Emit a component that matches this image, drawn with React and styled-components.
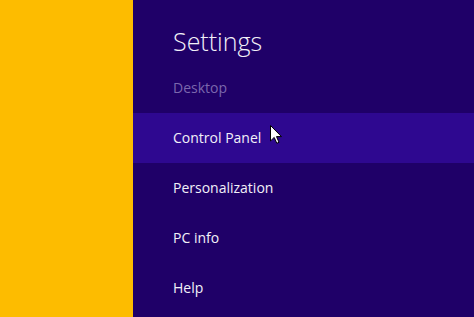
import React from "react";
import styled, { createGlobalStyle } from "styled-components";

const items = [
  { label: "Desktop", muted: true },
  { label: "Control Panel", active: true },
  { label: "Personalization" },
  { label: "PC info" },
  { label: "Help" },
];

export default function App() {
  return (
    <>
      <Global />
      <Screen>
        <Backdrop />
        <Charm>
          <Title>Settings</Title>
          <List>
            {items.map((it) => (
              <Item key={it.label} $active={it.active} $muted={it.muted}>
                <Label>{it.label}</Label>
                {it.active && (
                  <Cursor viewBox="0 0 12 19" width="12" height="19">
                    <path
                      d="M0.5 0.5 L0.5 16 L4.2 12.4 L6.8 18.3 L9 17.3 L6.5 11.6 L11.5 11.6 Z"
                      fill="#fff"
                      stroke="#000"
                      strokeWidth="1"
                      strokeLinejoin="miter"
                    />
                  </Cursor>
                )}
              </Item>
            ))}
          </List>
        </Charm>
      </Screen>
    </>
  );
}

const Global = createGlobalStyle`
  html, body {
    margin: 0;
    padding: 0;
    overflow: hidden;
  }
`;

const Screen = styled.div`
  display: flex;
  width: 474px;
  height: 317px;
  font-family: "Open Sans", "Noto Sans", sans-serif;
`;

const Backdrop = styled.div`
  flex: 0 0 133px;
  background: #fdbc00;
`;

const Charm = styled.div`
  flex: 1;
  background: #1f0068;
  display: flex;
  flex-direction: column;
`;

const Title = styled.h1`
  margin: 0;
  padding: 25px 0 0 40px;
  height: 38px;
  font-size: 25px;
  font-weight: 300;
  line-height: 32px;
  color: #f2f0f8;
`;

const List = styled.div`
  display: flex;
  flex-direction: column;
`;

const Item = styled.div`
  position: relative;
  height: 50px;
  display: flex;
  align-items: center;
  padding-left: 40px;
  font-size: 14px;
  font-weight: 400;
  color: ${(p) => (p.$muted ? "#7b67ad" : "#f2f0f8")};
  background: ${(p) => (p.$active ? "#2e0890" : "transparent")};
`;

const Label = styled.span`
  position: relative;
  top: -1px;
`;

const Cursor = styled.svg`
  position: absolute;
  left: 137px;
  top: 12px;
`;
